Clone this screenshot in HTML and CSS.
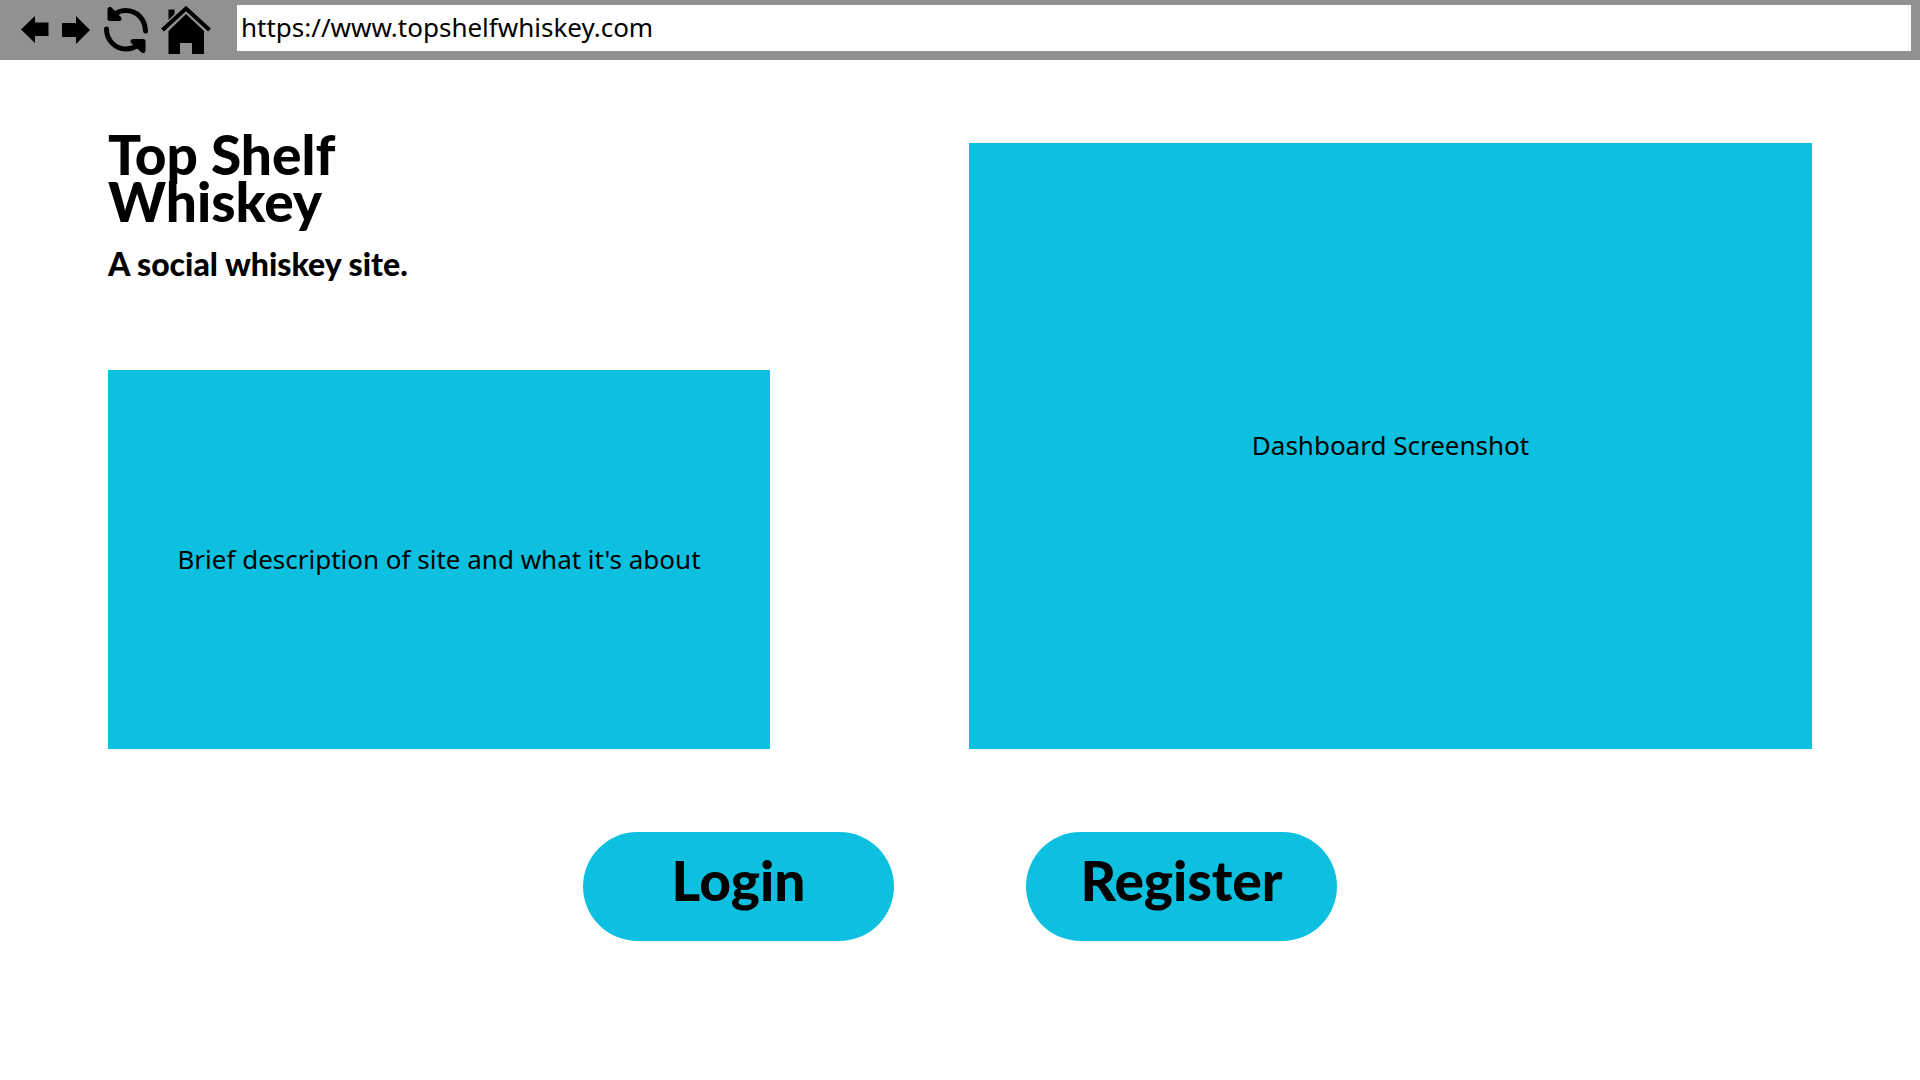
FILE: index.html
```html
<!DOCTYPE html>
<html lang="en">
<head>
<meta charset="utf-8">
<meta name="viewport" content="width=device-width, initial-scale=1">
<title>Top Shelf Whiskey</title>
<link rel="stylesheet" href="styles.css">
</head>
<body>
<header class="browser-bar">
  <nav class="browser-nav" aria-label="Browser controls">
    <button class="nav-button" type="button" aria-label="Back">
      <svg width="28" height="28" viewBox="0 0 28 28"><path d="M0 13.500 14 0V6.500H27.500V20H14V27Z"/></svg>
    </button>
    <button class="nav-button" type="button" aria-label="Forward">
      <svg width="30" height="28" viewBox="0 0 30 28"><path d="M29 14 15 0V7H1V21H15V28Z"/></svg>
    </button>
    <button class="nav-button" type="button" aria-label="Reload">
      <svg width="46" height="46" viewBox="0 0 46 46" fill="none" stroke="#000" stroke-width="5" stroke-linecap="round" stroke-linejoin="round">
        <path d="M42.500 24C42 12 34 3.500 22.500 3.500C17 3.500 13 5.500 9 9.500"/>
        <path d="M3.500 22C3.500 33 12 42 23 42C28 42 33 40 37 36.500"/>
        <path d="M7 2.500V11.500H16Z" fill="#000"/>
        <path d="M40 43.500V34.500H30Z" fill="#000"/>
      </svg>
    </button>
    <button class="nav-button" type="button" aria-label="Home">
      <svg width="50" height="48" viewBox="0 0 50 48"><path d="M7.500 3.500H13.500V8L7.500 14Z"/><path d="M1.500 24 25 2.500 48.500 24" fill="none" stroke="#000" stroke-width="4"/><path d="M25 8 43 25V48H31V37H19V48H7.500V25Z"/></svg>
    </button>
  </nav>
  <input class="address" type="text" aria-label="Address" value="https://www.topshelfwhiskey.com">
</header>
<main class="page">
  <div class="showcase">
    <section class="intro">
      <h1 class="title">Top Shelf<br>Whiskey</h1>
      <p class="tagline">A social whiskey site.</p>
      <div class="panel description">Brief description of site and what it's about</div>
    </section>
    <div class="panel dashboard">Dashboard Screenshot</div>
  </div>
  <div class="actions">
    <button class="action" type="button">Login</button>
    <button class="action" type="button">Register</button>
  </div>
</main>
</body>
</html>
```
FILE: styles.css
```css
* { box-sizing: border-box; }

body {
  margin: 0;
  background: #fff;
  color: #000;
  font-family: "Noto Sans", sans-serif;
  font-size: 26px;
}

.browser-bar {
  display: flex;
  align-items: center;
  gap: 26px;
  height: 60px;
  padding: 0 9px 4px 21px;
  background: #919191;
}

.browser-nav {
  display: flex;
  align-items: center;
  gap: 12px;
  padding-top: 3px;
}

.nav-button {
  display: flex;
  padding: 0;
  border: 0;
  background: none;
}

.address {
  flex: 1;
  min-width: 0;
  height: 46px;
  padding: 0 4px 2px;
  border: 0;
  background: #fff;
  color: #000;
  font: inherit;
}

.page { padding: 71px 108px; }

.showcase {
  display: grid;
  grid-template-columns: 662fr 843fr;
  column-gap: 199px;
}

.intro {
  display: flex;
  flex-direction: column;
}

.title {
  margin: 0;
  font-family: Lato, sans-serif;
  font-size: 55px;
  font-weight: 900;
  line-height: 47px;
}

.tagline {
  margin: 17px 0 84px;
  font-family: Lato, sans-serif;
  font-size: 32px;
  font-weight: 900;
  line-height: 44px;
}

.panel {
  display: flex;
  align-items: center;
  justify-content: center;
  padding: 0 24px 2px;
  background: #0dc0e0;
  text-align: center;
}

.description { min-height: 379px; }

.dashboard { margin-top: 12px; }

.actions {
  display: flex;
  flex-wrap: wrap;
  justify-content: center;
  gap: 132px;
  margin-top: 83px;
}

.action {
  width: 311px;
  height: 109px;
  padding: 0 0 14px;
  border: 0;
  border-radius: 55px;
  background: #0dc0e0;
  color: #000;
  font-family: Lato, sans-serif;
  font-size: 55px;
  font-weight: 900;
}
```
